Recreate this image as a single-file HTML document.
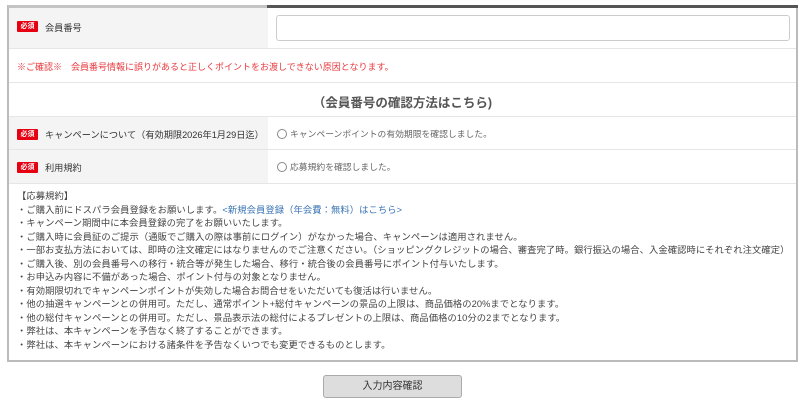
<!DOCTYPE html>
<html><head><meta charset="utf-8"><style>
*{margin:0;padding:0;box-sizing:border-box}
body{width:800px;height:404px;background:#fff;font-family:"Liberation Sans","Noto Sans CJK JP",sans-serif;color:#333;position:relative;overflow:hidden}
.box{position:absolute;left:7px;top:5px;width:791px;height:357px;border:2px solid #bbb;border-top:3px solid #c4c4c4}
.topdark{position:absolute;left:267px;top:5px;width:531px;height:3px;background:#555}
.row{position:absolute;left:0;width:787px;border-bottom:1px solid #e6e6e6}
.lc{position:absolute;left:0;top:0;bottom:0;width:259px;background:#f4f4f4}
.badge{position:absolute;left:8px;width:21px;height:11px;background:#e60012;color:#fff;font-size:7px;font-weight:bold;text-align:center;line-height:11px;border-radius:1px}
.lab{position:absolute;left:36px;font-size:9.2px;color:#333;white-space:nowrap}
.radio{position:absolute;left:268px;font-size:8.8px;color:#666;white-space:nowrap}
.radio i{display:inline-block;width:10px;height:10px;border:1px solid #888;border-radius:50%;vertical-align:-2px;margin-right:3px;background:#fff}
.rules{position:absolute;left:17px;top:190px;font-size:9.3px;line-height:13.5px;color:#444;white-space:nowrap;letter-spacing:0.08px}
.rules a{color:#3a74b4;text-decoration:none}
.btn{position:absolute;left:323px;top:375px;width:139px;height:23px;background:#ddd;border:1px solid #aaa;border-radius:3px;font-size:10px;color:#333;text-align:center;line-height:21px}
</style></head><body>
<div class="box">
 <div class="row" style="top:0;height:41px"><div class="lc"></div><div class="badge" style="top:13px">必須</div><div class="lab" style="top:12px">会員番号</div>
 <div style="position:absolute;left:267px;top:7px;width:514px;height:26px;border:1px solid #ccc;border-radius:3px;background:#fff"></div></div>
 <div class="row" style="top:41px;height:34px"><div style="position:absolute;left:8px;top:11px;font-size:9px;color:#e8383d;white-space:nowrap">※ご確認※　会員番号情報に誤りがあると正しくポイントをお渡しできない原因となります。</div></div>
 <div class="row" style="top:75px;height:34px"><div style="position:absolute;left:0;width:787px;top:9px;text-align:center;font-size:12.5px;font-weight:bold;color:#555">（会員番号の確認方法はこちら)</div></div>
 <div class="row" style="top:109px;height:33px"><div class="lc"></div><div class="badge" style="top:12px">必須</div><div class="lab" style="top:10px">キャンペーンについて（有効期限2026年1月29日迄）</div><div class="radio" style="top:10px"><i></i>キャンペーンポイントの有効期限を確認しました。</div></div>
 <div class="row" style="top:142px;height:34px"><div class="lc"></div><div class="badge" style="top:12px">必須</div><div class="lab" style="top:10px">利用規約</div><div class="radio" style="top:10px"><i></i>応募規約を確認しました。</div></div>
</div>
<div class="topdark"></div>
<div class="rules">【応募規約】<br>・ご購入前にドスパラ会員登録をお願いします。<a>&lt;新規会員登録（年会費：無料）はこちら&gt;</a><br>・キャンペーン期間中に本会員登録の完了をお願いいたします。<br>・ご購入時に会員証のご提示（通販でご購入の際は事前にログイン）がなかった場合、キャンペーンは適用されません。<br>・一部お支払方法においては、即時の注文確定にはなりませんのでご注意ください。（ショッピングクレジットの場合、審査完了時。銀行振込の場合、入金確認時にそれぞれ注文確定）<br>・ご購入後、別の会員番号への移行・統合等が発生した場合、移行・統合後の会員番号にポイント付与いたします。<br>・お申込み内容に不備があった場合、ポイント付与の対象となりません。<br>・有効期限切れでキャンペーンポイントが失効した場合お問合せをいただいても復活は行いません。<br>・他の抽選キャンペーンとの併用可。ただし、通常ポイント+総付キャンペーンの景品の上限は、商品価格の20%までとなります。<br>・他の総付キャンペーンとの併用可。ただし、景品表示法の総付によるプレゼントの上限は、商品価格の10分の2までとなります。<br>・弊社は、本キャンペーンを予告なく終了することができます。<br>・弊社は、本キャンペーンにおける諸条件を予告なくいつでも変更できるものとします。</div>
<div class="btn">入力内容確認</div>
</body></html>
